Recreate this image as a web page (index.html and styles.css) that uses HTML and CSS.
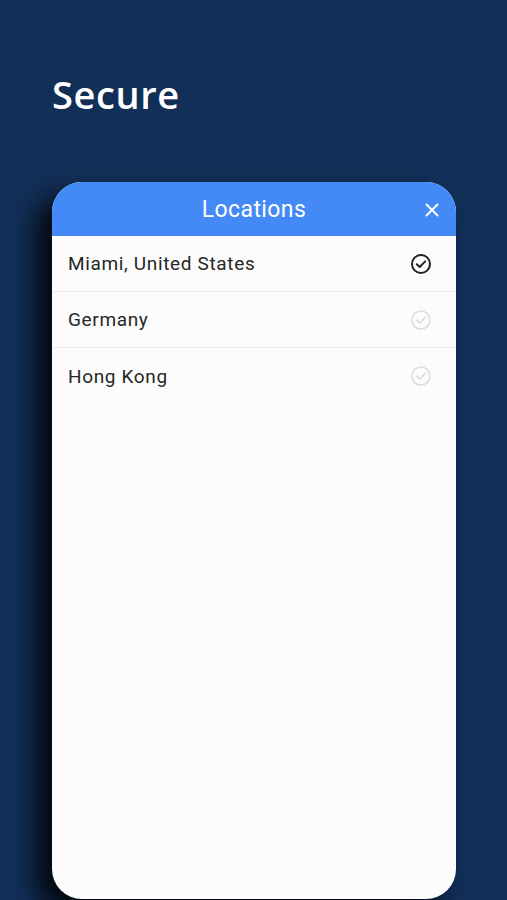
FILE: index.html
```html
<!DOCTYPE html>
<html lang="en">
<head>
    <meta charset="UTF-8">
    <meta name="viewport" content="width=device-width, initial-scale=1.0">
    <title>Secure</title>
    <link rel="stylesheet" href="styles.css">
</head>
<body>
    <h1 class="headline">Secure</h1>
    <div class="phone">
        <div class="phone-header">
            <span class="phone-title">Locations</span>
            <svg class="close" width="16" height="16" viewBox="0 0 16 16">
                <path d="M2.5 2.5L13.5 13.5M13.5 2.5L2.5 13.5" stroke="#fff" stroke-width="2" stroke-linecap="round"/>
            </svg>
        </div>
        <ul class="locations">
            <li class="location">
                <span>Miami, United States</span>
                <svg class="check" width="22" height="22" viewBox="0 0 22 22">
                    <circle cx="11" cy="11" r="9" fill="none" stroke="#222" stroke-width="2"/>
                    <path d="M6.8 11.2L9.7 14L15.2 8.4" fill="none" stroke="#222" stroke-width="2" stroke-linecap="round" stroke-linejoin="round"/>
                </svg>
            </li>
            <li class="location">
                <span>Germany</span>
                <svg class="check" width="22" height="22" viewBox="0 0 22 22">
                    <circle cx="11" cy="11" r="9" fill="none" stroke="#ddd" stroke-width="1.6"/>
                    <path d="M6.8 11.2L9.7 14L15.2 8.4" fill="none" stroke="#ddd" stroke-width="1.6" stroke-linecap="round" stroke-linejoin="round"/>
                </svg>
            </li>
            <li class="location">
                <span>Hong Kong</span>
                <svg class="check" width="22" height="22" viewBox="0 0 22 22">
                    <circle cx="11" cy="11" r="9" fill="none" stroke="#ddd" stroke-width="1.6"/>
                    <path d="M6.8 11.2L9.7 14L15.2 8.4" fill="none" stroke="#ddd" stroke-width="1.6" stroke-linecap="round" stroke-linejoin="round"/>
                </svg>
            </li>
        </ul>
    </div>
</body>
</html>
```

FILE: styles.css
```css
body {
    margin: 0;
    height: 900px;
    overflow: hidden;
    background-color: #122f58;
    font-family: Roboto, "Liberation Sans", sans-serif;
}
.headline {
    margin: 0;
    padding: 72px 0 0 52px;
    height: 110px;
    box-sizing: border-box;
    font-family: "Open Sans", sans-serif;
    font-weight: 600;
    font-size: 38px;
    line-height: 44px;
    letter-spacing: 0.6px;
    color: #ffffff;
}
.phone {
    margin-left: 52px;
    margin-top: 72px;
    width: 404px;
    height: 717px;
    background-color: #fcfcfc;
    border-radius: 30px;
    overflow: hidden;
    box-shadow: -16px 14px 26px rgba(0, 0, 0, 0.85);
}
.phone-header {
    height: 54px;
    background-color: #448af6;
    display: flex;
    align-items: center;
    justify-content: center;
    position: relative;
}
.phone-title {
    color: #ffffff;
    font-size: 23px;
    letter-spacing: 0.4px;
}
.close {
    position: absolute;
    right: 16px;
    top: 20px;
}
.locations {
    list-style: none;
    margin: 0;
    padding: 0;
}
.location {
    height: 56px;
    box-sizing: border-box;
    display: flex;
    align-items: center;
    justify-content: space-between;
    padding: 0 24px 0 16px;
    border-bottom: 1px solid #ececec;
    font-size: 19px;
    color: #262626;
    letter-spacing: 0.65px;
}
.location:last-child {
    border-bottom: none;
}
```
